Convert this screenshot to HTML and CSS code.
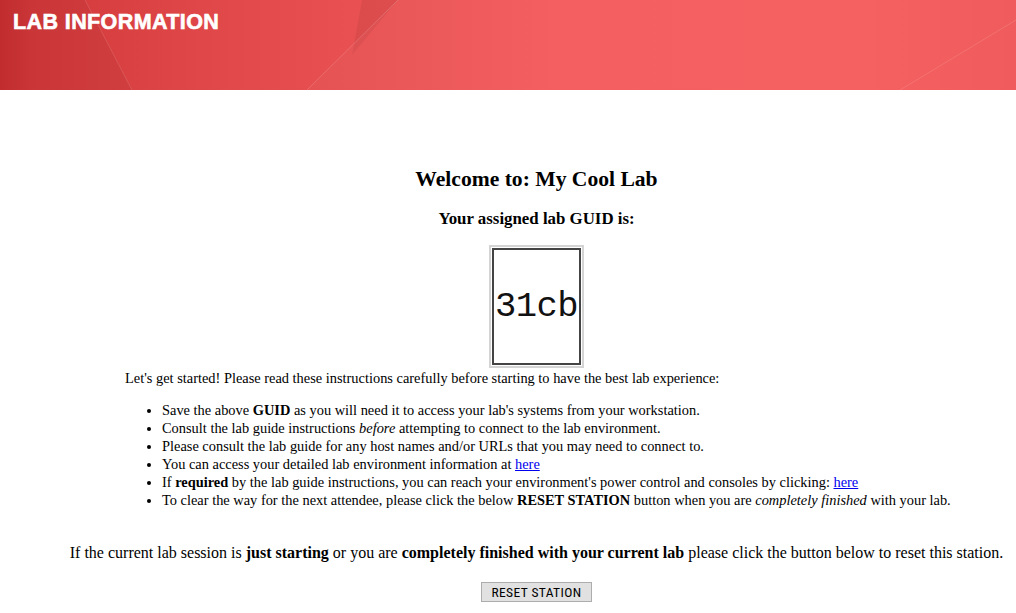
FILE: index.html
```html
<!DOCTYPE html>
<html>
<head>
<meta charset="utf-8">
<title>Lab Information</title>
<link rel="stylesheet" href="styles.css">
</head>
<body>
<header class="banner">
  <svg class="banner-bg" viewBox="0 0 1016 90" preserveAspectRatio="none" aria-hidden="true">
    <defs>
      <linearGradient id="bg" x1="0" y1="0" x2="1" y2="0">
        <stop offset="0" stop-color="#c92e30"/>
        <stop offset="0.03" stop-color="#d3393b"/>
        <stop offset="0.2" stop-color="#df4748"/>
        <stop offset="0.38" stop-color="#ea5253"/>
        <stop offset="0.55" stop-color="#f45b5c"/>
        <stop offset="0.85" stop-color="#f55b5c"/>
        <stop offset="1" stop-color="#f05758"/>
      </linearGradient>
    </defs>
    <rect x="0" y="0" width="1016" height="90" fill="url(#bg)"/>
    <polygon points="0,0 85,0 132,90 0,90" fill="#000" fill-opacity="0.04"/>
    <line x1="85" y1="0" x2="132" y2="90" stroke="#fff" stroke-opacity="0.12" stroke-width="1"/>
    <polygon points="398,0 1016,0 1016,90 307,90" fill="#fff" fill-opacity="0.03"/>
    <polygon points="362,0 398,0 352,55" fill="#000" fill-opacity="0.05"/>
    <line x1="398" y1="0" x2="307" y2="90" stroke="#fff" stroke-opacity="0.16" stroke-width="1"/>
    <line x1="1016" y1="20" x2="900" y2="90" stroke="#fff" stroke-opacity="0.12" stroke-width="1"/>
  </svg>
  <h1 class="banner-title">LAB INFORMATION</h1>
</header>

<main class="content">
  <h2 class="welcome">Welcome to: My Cool Lab</h2>
  <h3 class="guid-label">Your assigned lab GUID is:</h3>
  <div class="guid-wrap">
    <div class="guid-outer">
      <div class="guid-inner">31cb</div>
    </div>
  </div>
  <div class="instructions">
    <p class="intro">Let's get started! Please read these instructions carefully before starting to have the best lab experience:</p>
    <ul class="steps">
      <li>Save the above <b>GUID</b> as you will need it to access your lab's systems from your workstation.</li>
      <li>Consult the lab guide instructions <i>before</i> attempting to connect to the lab environment.</li>
      <li>Please consult the lab guide for any host names and/or URLs that you may need to connect to.</li>
      <li>You can access your detailed lab environment information at <a href="#">here</a></li>
      <li>If <b>required</b> by the lab guide instructions, you can reach your environment's power control and consoles by clicking: <a href="#">here</a></li>
      <li>To clear the way for the next attendee, please click the below <b>RESET STATION</b> button when you are <i>completely finished</i> with your lab.</li>
    </ul>
  </div>
  <p class="reset-note">If the current lab session is <b>just starting</b> or you are <b>completely finished with your current lab</b> please click the button below to reset this station.</p>
  <div class="reset-row">
    <button class="reset-btn" type="button">RESET STATION</button>
  </div>
</main>
</body>
</html>
```

FILE: styles.css
```css
html, body {
  margin: 0;
  padding: 0;
  background: #ffffff;
}

body {
  font-family: "Liberation Serif", "Times New Roman", serif;
  font-size: 16px;
  color: #000;
}

.banner {
  position: relative;
  height: 90px;
  overflow: hidden;
}

.banner-bg {
  position: absolute;
  left: 0;
  top: 0;
  width: 100%;
  height: 100%;
  display: block;
}

.banner-title {
  position: relative;
  margin: 0;
  padding: 10px 0 0 13px;
  font-family: "Liberation Sans", Arial, sans-serif;
  font-weight: bold;
  font-size: 21.5px;
  letter-spacing: 0.4px;
  line-height: 24px;
  color: #fff;
  -webkit-text-stroke: 0.6px #fff;
}

.content {
  margin-left: 57px;
  padding-top: 77px;
}

.welcome {
  margin: 0;
  text-align: center;
  font-size: 21.6px;
  line-height: 24px;
  font-weight: bold;
}

.guid-label {
  margin: 18px 0 0;
  text-align: center;
  font-size: 16.85px;
  line-height: 19px;
  font-weight: bold;
}

.guid-wrap {
  display: flex;
  justify-content: center;
  margin-top: 17px;
}

.guid-outer {
  border: 2px solid #d4d4d4;
  padding: 1px;
}

.guid-inner {
  width: 85px;
  height: 113px;
  border: 2px solid #444;
  display: flex;
  align-items: center;
  justify-content: center;
  font-family: "Liberation Mono", "Courier New", monospace;
  font-size: 35.5px;
  letter-spacing: -0.5px;
  color: #111;
}

.instructions {
  margin-left: 68px;
}

.intro {
  margin: 1px 0 0;
  line-height: 18px;
  font-size: 14.4px;
}

.steps {
  margin: 14px 0 0;
  padding-left: 37px;
  line-height: 18px;
  font-size: 14.4px;
}

.steps a {
  color: #0000ee;
}

.reset-note {
  margin: 35px 0 0;
  text-align: center;
  line-height: 18px;
  font-size: 16px;
}

.reset-row {
  display: flex;
  justify-content: center;
  margin-top: 20px;
}

.reset-btn {
  width: 111px;
  height: 20px;
  padding: 0;
  background: #e1e1e1;
  border: 1px solid #adadad;
  border-radius: 0;
  font-family: "Liberation Sans Narrow", "Roboto Condensed", "Liberation Sans", Arial, sans-serif;
  font-size: 13.5px;
  letter-spacing: 0.4px;
  color: #000;
  line-height: 18px;
}
```
